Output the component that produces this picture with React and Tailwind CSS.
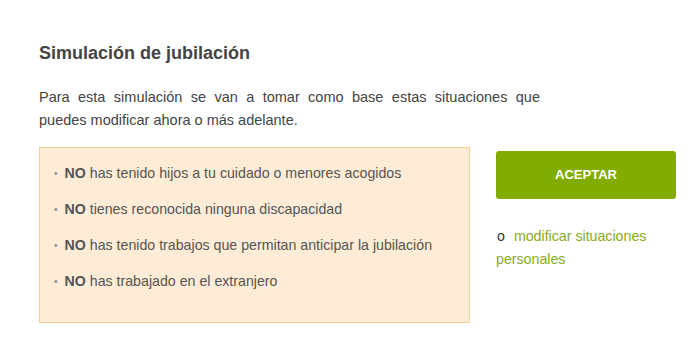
export default function App() {
  const items = [
    'has tenido hijos a tu cuidado o menores acogidos',
    'tienes reconocida ninguna discapacidad',
    'has tenido trabajos que permitan anticipar la jubilación',
    'has trabajado en el extranjero',
  ];

  return (
    <div className="w-[700px] h-[346px] bg-white overflow-hidden font-['Liberation_Sans',Arial,sans-serif] text-[#555]">
      <div className="pl-[39px] pt-[41px]">
        <h1 className="text-[18px] leading-[24px] font-bold text-[#444]">Simulación de jubilación</h1>
        <p className="mt-[21px] w-[501px] text-[14.5px] leading-[23px] text-justify text-[#444]">
          Para esta simulación se van a tomar como base estas situaciones que puedes modificar ahora o más adelante.
        </p>

        <div className="mt-[15px] flex">
          <div className="w-[431px] h-[176px] bg-[#feecd6] border border-[#f7cf95] pt-[14px] pl-[14px]">
            <ul className="flex flex-col gap-[13px]">
              {items.map((t) => (
                <li key={t} className="flex items-center text-[14.2px] leading-[23px]">
                  <span className="text-[#888] text-[10px] mr-[7px]">•</span>
                  <span>
                    <b className="text-[#555]">NO</b> {t}
                  </span>
                </li>
              ))}
            </ul>
          </div>

          <div className="ml-[26px] pt-[4px]">
            <button className="w-[180px] h-[48px] rounded-[3px] bg-[#82ad00] text-white text-[13px] font-bold">
              ACEPTAR
            </button>
            <div className="mt-[26px] text-[14.2px] leading-[23px]">
              <div className="flex">
                <span className="text-[#333] ml-[1px] mr-[9px]">o</span>
                <a className="text-[#86ab1e]">modificar situaciones</a>
              </div>
              <a className="block text-[#86ab1e]">personales</a>
            </div>
          </div>
        </div>
      </div>
    </div>
  );
}
